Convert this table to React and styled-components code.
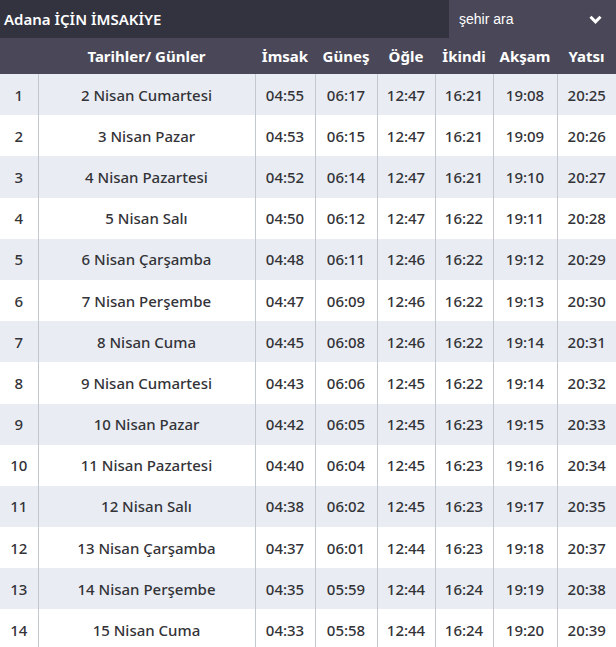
import styled, { createGlobalStyle } from "styled-components";

const GlobalStyle = createGlobalStyle`
  html, body {
    margin: 0;
    padding: 0;
    background: #ffffff;
  }
  body {
    font-family: "Noto Sans", "Open Sans", sans-serif;
  }
`;

const rows = [
  ["2 Nisan Cumartesi", "04:55", "06:17", "12:47", "16:21", "19:08", "20:25"],
  ["3 Nisan Pazar", "04:53", "06:15", "12:47", "16:21", "19:09", "20:26"],
  ["4 Nisan Pazartesi", "04:52", "06:14", "12:47", "16:21", "19:10", "20:27"],
  ["5 Nisan Salı", "04:50", "06:12", "12:47", "16:22", "19:11", "20:28"],
  ["6 Nisan Çarşamba", "04:48", "06:11", "12:46", "16:22", "19:12", "20:29"],
  ["7 Nisan Perşembe", "04:47", "06:09", "12:46", "16:22", "19:13", "20:30"],
  ["8 Nisan Cuma", "04:45", "06:08", "12:46", "16:22", "19:14", "20:31"],
  ["9 Nisan Cumartesi", "04:43", "06:06", "12:45", "16:22", "19:14", "20:32"],
  ["10 Nisan Pazar", "04:42", "06:05", "12:45", "16:23", "19:15", "20:33"],
  ["11 Nisan Pazartesi", "04:40", "06:04", "12:45", "16:23", "19:16", "20:34"],
  ["12 Nisan Salı", "04:38", "06:02", "12:45", "16:23", "19:17", "20:35"],
  ["13 Nisan Çarşamba", "04:37", "06:01", "12:44", "16:23", "19:18", "20:37"],
  ["14 Nisan Perşembe", "04:35", "05:59", "12:44", "16:24", "19:19", "20:38"],
  ["15 Nisan Cuma", "04:33", "05:58", "12:44", "16:24", "19:20", "20:39"],
];

const columns = ["", "Tarihler/ Günler", "İmsak", "Güneş", "Öğle", "İkindi", "Akşam", "Yatsı"];
const widths = [38, 217, 60, 62, 58, 58, 64, 59];

const Wrapper = styled.div`
  width: 616px;
  overflow: hidden;
`;

const TitleBar = styled.div`
  display: flex;
  align-items: stretch;
  height: 38px;
  background: #33323f;
`;

const Title = styled.h1`
  flex: 1;
  margin: 0;
  padding-left: 4px;
  display: flex;
  align-items: center;
  color: #ffffff;
  font-size: 15px;
  font-weight: 600;
`;

const CitySelect = styled.div`
  box-sizing: border-box;
  width: 167px;
  padding: 0 14px 0 10px;
  display: flex;
  align-items: center;
  justify-content: space-between;
  background: #4a4858;
  color: #ffffff;
  font-family: "Liberation Sans", Arial, sans-serif;
  font-size: 14px;
`;

const Table = styled.table`
  width: 616px;
  border-collapse: collapse;
  table-layout: fixed;
`;

const HeadRow = styled.tr`
  height: 36px;
  background: #4a4858;
`;

const HeadCell = styled.th`
  padding: 0;
  color: #ffffff;
  font-size: 15px;
  font-weight: 700;
  text-align: center;
  white-space: nowrap;
`;

const Row = styled.tr`
  height: 41.2px;
  background: ${(p) => (p.$striped ? "#e9edf3" : "#ffffff")};
`;

const Cell = styled.td`
  padding: 0;
  color: #333338;
  font-size: 15px;
  font-weight: 500;
  text-align: center;
  white-space: nowrap;
  border-left: 1px solid #c3c7ce;
  &:first-child {
    border-left: none;
  }
`;

const Chevron = () => (
  <svg width="13" height="9" viewBox="0 0 13 9">
    <path d="M1.5 1.8 L6.5 6.8 L11.5 1.8" fill="none" stroke="#ffffff" strokeWidth="3" />
  </svg>
);

export default function App() {
  return (
    <Wrapper>
      <GlobalStyle />
      <TitleBar>
        <Title>Adana İÇİN İMSAKİYE</Title>
        <CitySelect>
          <span>şehir ara</span>
          <Chevron />
        </CitySelect>
      </TitleBar>
      <Table>
        <colgroup>
          {widths.map((w, i) => (
            <col key={i} style={{ width: w }} />
          ))}
        </colgroup>
        <thead>
          <HeadRow>
            {columns.map((c, i) => (
              <HeadCell key={i}>{c}</HeadCell>
            ))}
          </HeadRow>
        </thead>
        <tbody>
          {rows.map((r, i) => (
            <Row key={i} $striped={i % 2 === 0}>
              <Cell>{i + 1}</Cell>
              {r.map((v, j) => (
                <Cell key={j}>{v}</Cell>
              ))}
            </Row>
          ))}
        </tbody>
      </Table>
    </Wrapper>
  );
}
